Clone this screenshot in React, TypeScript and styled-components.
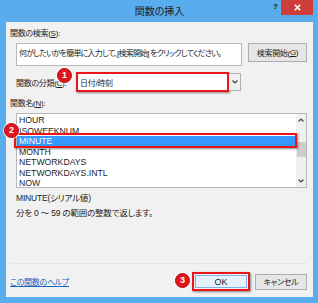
import React from 'react';
import styled, { createGlobalStyle } from 'styled-components';

const FONT = `"Liberation Sans", "Noto Sans CJK JP", sans-serif`;

const GlobalStyle = createGlobalStyle`
  html, body {
    margin: 0;
    padding: 0;
    background: #fff;
  }
  body {
    font-family: ${FONT};
    font-feature-settings: "palt";
    color: #1e1e1e;
  }
`;

const Window = styled.div`
  box-sizing: border-box;
  width: 318px;
  height: 303px;
  background: #59adec;
  padding: 0 5px 6px 6px;
  display: flex;
  flex-direction: column;
`;

const TitleBar = styled.div`
  height: 22px;
  display: grid;
  grid-template-columns: 1fr auto 1fr;
  align-items: start;
`;

const Title = styled.div`
  grid-column: 2;
  font-size: 10px;
  line-height: 24px;
  color: #1a1a1a;
`;

const Controls = styled.div`
  grid-column: 3;
  justify-self: end;
  display: flex;
  align-items: flex-start;
`;

const HelpMark = styled.div`
  font-size: 8px;
  font-weight: bold;
  line-height: 14px;
  margin-right: 3px;
  color: #1a1a1a;
`;

const CloseButton = styled.div`
  width: 32px;
  height: 15px;
  background: #cf3d3b;
  display: flex;
  align-items: center;
  justify-content: center;
`;

const Content = styled.div`
  flex: 1;
  background: #f1f1f1;
  display: flex;
  flex-direction: column;
  padding: 6px 6px 0 4px;
  font-size: 8px;
  letter-spacing: -0.3px;
`;

const Label = styled.div<{ $top?: number }>`
  line-height: 11px;
  height: 11px;
  margin-top: ${p => p.$top ?? 0}px;
  white-space: nowrap;
`;

const Underlined = styled.span`
  text-decoration: underline;
`;

const SearchRow = styled.div`
  margin: 4px 0 0 6px;
  display: flex;
  gap: 6px;
  align-items: flex-start;
`;

const HintBox = styled.div`
  box-sizing: border-box;
  width: 226px;
  height: 23px;
  border: 1px solid #b5b7bd;
  background: #fff;
  padding: 4px 2px;
  line-height: 11px;
  letter-spacing: -0.8px;
  white-space: nowrap;
  overflow: hidden;
`;

const Button = styled.div<{ $w: number; $h: number }>`
  box-sizing: border-box;
  width: ${p => p.$w}px;
  height: ${p => p.$h}px;
  border: 1px solid #adadad;
  background: #e6e6e6;
  display: flex;
  align-items: center;
  justify-content: center;
  white-space: nowrap;
`;

const CategoryRow = styled.div`
  position: relative;
  margin: 6px 0 0 6px;
  height: 20px;
  display: flex;
  align-items: center;
`;

const CategoryLabel = styled.div`
  width: 60px;
  white-space: nowrap;
`;

const ComboField = styled.div`
  box-sizing: border-box;
  width: 153px;
  height: 20px;
  background: #fff;
  border: 2px solid #e8151a;
  box-shadow: 1px 1px 2px rgba(0, 0, 0, 0.45);
  padding-left: 2px;
  display: flex;
  align-items: center;
`;

const ComboArrow = styled.div`
  box-sizing: border-box;
  width: 12px;
  height: 18px;
  border: 1px solid #b0b0b0;
  border-left: none;
  background: #f0f0f0;
  display: flex;
  align-items: center;
  justify-content: center;
`;

const Badge = styled.div<{ $left: number; $top: number }>`
  position: absolute;
  left: ${p => p.$left}px;
  top: ${p => p.$top}px;
  box-sizing: border-box;
  width: 15px;
  height: 15px;
  border-radius: 50%;
  background: #e3141b;
  border: 1px solid #b40c10;
  box-shadow: 0 0 0 1px rgba(255, 255, 255, 0.7);
  color: #fff;
  font-family: "Liberation Sans", sans-serif;
  font-weight: bold;
  font-size: 9px;
  letter-spacing: 0;
  line-height: 13px;
  text-align: center;
  z-index: 2;
`;

const ListBox = styled.div`
  position: relative;
  box-sizing: border-box;
  margin: 4px 0 0 6px;
  width: 291px;
  height: 75px;
  border: 1px solid #b5b7bd;
  background: #fff;
  display: flex;
`;

const Items = styled.div`
  flex: 1;
  padding-top: 1px;
  overflow: hidden;
`;

const Item = styled.div<{ $selected?: boolean }>`
  height: 10.5px;
  line-height: 10.5px;
  padding-left: 2px;
  font-size: 8.7px;
  letter-spacing: 0;
  background: ${p => (p.$selected ? '#3399ff' : 'transparent')};
  color: ${p => (p.$selected ? '#fff' : '#1e1e1e')};
  white-space: nowrap;
`;

const SelectFrame = styled.div`
  position: absolute;
  left: -3px;
  top: 19px;
  width: 283px;
  height: 15px;
  box-sizing: border-box;
  border: 2px solid #e8151a;
  box-shadow: 1px 1px 2px rgba(0, 0, 0, 0.45);
`;

const ScrollBar = styled.div`
  width: 10px;
  display: flex;
  flex-direction: column;
  background: #f0f0f0;
`;

const ScrollArrow = styled.div`
  height: 12px;
  display: flex;
  align-items: center;
  justify-content: center;
`;

const ScrollTrack = styled.div`
  flex: 1;
  display: flex;
  flex-direction: column;
  align-items: center;
`;

const Thumb = styled.div`
  margin-top: 16px;
  width: 9px;
  height: 15px;
  background: #cdcdcd;
`;

const Description = styled.div`
  margin: 3px 0 0 6px;
  line-height: 15px;
  font-size: 8.5px;
  letter-spacing: -0.2px;
  white-space: nowrap;
`;

const Spacer = styled.div`
  flex: 1;
`;

const Separator = styled.div`
  height: 1px;
  background: #e3e3e3;
`;

const Footer = styled.div`
  display: flex;
  align-items: center;
  padding: 8px 0 6px;
`;

const HelpLink = styled.a`
  margin-right: auto;
  color: #1565c0;
  text-decoration: underline;
  white-space: nowrap;
`;

const OkFrame = styled.div`
  position: relative;
  box-sizing: border-box;
  width: 58px;
  height: 19px;
  border: 2px solid #e8151a;
  box-shadow: 1px 1px 2px rgba(0, 0, 0, 0.45);
  padding: 1px;
  margin-right: 5px;
  display: flex;
`;

const OkButton = styled.div`
  flex: 1;
  border: 1px solid #7eb4ea;
  background: #e5f1fb;
  display: flex;
  align-items: center;
  justify-content: center;
  font-family: "Liberation Sans", sans-serif;
  font-size: 9px;
  letter-spacing: 0;
`;

const Chevron = ({ up }: { up?: boolean }) => (
  <svg width="6" height="4" viewBox="0 0 6 4">
    <polyline
      points={up ? '0.5,3.5 3,1 5.5,3.5' : '0.5,0.5 3,3 5.5,0.5'}
      fill="none"
      stroke="#444"
      strokeWidth="1.2"
    />
  </svg>
);

const functions = ['HOUR', 'ISOWEEKNUM', 'MINUTE', 'MONTH', 'NETWORKDAYS', 'NETWORKDAYS.INTL', 'NOW'];

export default function App() {
  return (
    <>
      <GlobalStyle />
      <Window>
        <TitleBar>
          <Title>関数の挿入</Title>
          <Controls>
            <HelpMark>?</HelpMark>
            <CloseButton>
              <svg width="7" height="7" viewBox="0 0 7 7">
                <path d="M0.8 0.8 L6.2 6.2 M6.2 0.8 L0.8 6.2" stroke="#fff" strokeWidth="1.6" />
              </svg>
            </CloseButton>
          </Controls>
        </TitleBar>

        <Content>
          <Label>
            関数の検索(<Underlined>S</Underlined>):
          </Label>
          <SearchRow>
            <HintBox>何がしたいかを簡単に入力して、[検索開始] をクリックしてください。</HintBox>
            <Button $w={59} $h={19}>
              検索開始(<Underlined>G</Underlined>)
            </Button>
          </SearchRow>

          <CategoryRow>
            <CategoryLabel>
              関数の分類(<Underlined>C</Underlined>):
            </CategoryLabel>
            <Badge $left={41} $top={-4}>1</Badge>
            <ComboField>日付/時刻</ComboField>
            <ComboArrow>
              <Chevron />
            </ComboArrow>
          </CategoryRow>

          <Label $top={6}>
            関数名(<Underlined>N</Underlined>):
          </Label>
          <ListBox>
            <Items>
              {functions.map(name => (
                <Item key={name} $selected={name === 'MINUTE'}>
                  {name}
                </Item>
              ))}
            </Items>
            <ScrollBar>
              <ScrollArrow>
                <Chevron up />
              </ScrollArrow>
              <ScrollTrack>
                <Thumb />
              </ScrollTrack>
              <ScrollArrow>
                <Chevron />
              </ScrollArrow>
            </ScrollBar>
            <SelectFrame />
            <Badge $left={-13} $top={9}>2</Badge>
          </ListBox>

          <Description>
            MINUTE(シリアル値)
            <br />
            分を 0 ～ 59 の範囲の整数で返します。
          </Description>

          <Spacer />
          <Separator />
          <Footer>
            <HelpLink>この関数のヘルプ</HelpLink>
            <OkFrame>
              <Badge $left={-19} $top={-1}>3</Badge>
              <OkButton>OK</OkButton>
            </OkFrame>
            <Button $w={52} $h={16}>
              キャンセル
            </Button>
          </Footer>
        </Content>
      </Window>
    </>
  );
}
